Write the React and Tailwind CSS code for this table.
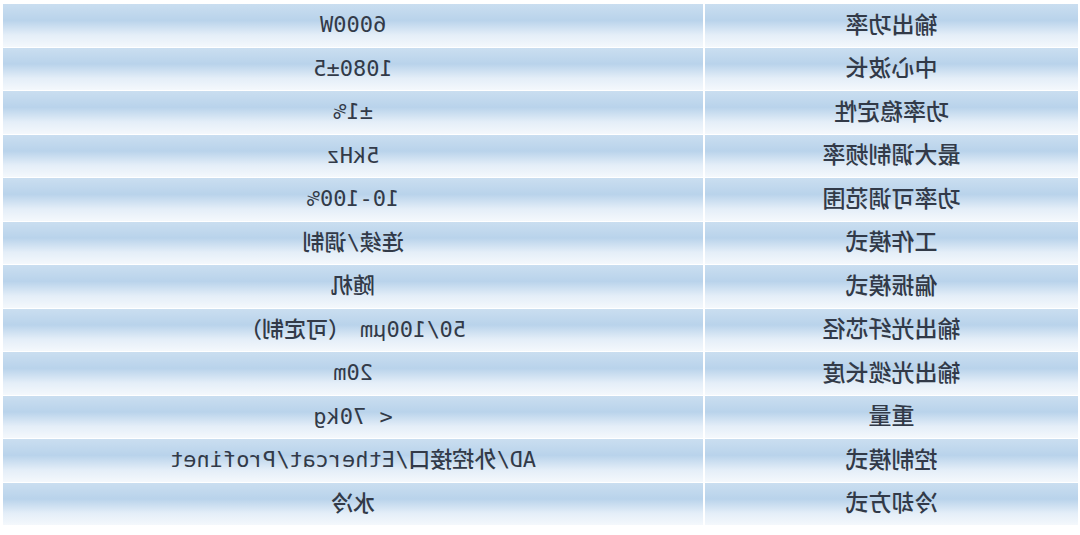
import React from "react";

const rows = [
  ["输出功率", "6000W"],
  ["中心波长", "1080±5"],
  ["功率稳定性", "±1%"],
  ["最大调制频率", "5kHz"],
  ["功率可调范围", "10-100%"],
  ["工作模式", "连续/调制"],
  ["偏振模式", "随机"],
  ["输出光纤芯径", "50/100μm（可定制）"],
  ["输出光缆长度", "20m"],
  ["重量", "< 70kg"],
  ["控制模式", "AD/外控接口/Ethercat/Profinet"],
  ["冷却方式", "水冷"],
];

const cell =
  "flex items-center justify-center bg-[linear-gradient(to_bottom,#cadef0_0%,#b9d3eb_38%,#e4eef8_72%,#f4f8fc_100%)] text-[#323a48] text-[22px] font-medium leading-none";

function Value({ v }) {
  if (v.includes("μm")) {
    const [a, b] = v.split("μm");
    return (
      <span>
        {a}
        <span className="pr-[10px]">μm</span>
        {b}
      </span>
    );
  }
  return <span>{v}</span>;
}

export default function App() {
  return (
    <div className="w-[1080px] h-[535px] bg-white overflow-hidden">
      <div
        className="w-[1080px] -scale-x-100 pt-[4px] pl-[2px] flex flex-col gap-px"
        style={{ fontFamily: '"DejaVu Sans Mono", "Noto Sans CJK SC", monospace' }}
      >
        {rows.map(([k, v]) => (
          <div key={k} className="flex h-[42.5px] gap-[2px]">
            <div className={cell + " w-[373px]"}>
              <span className="text-[23px]">{k}</span>
            </div>
            <div className={cell + " w-[700px]"}>
              <Value v={v} />
            </div>
          </div>
        ))}
      </div>
    </div>
  );
}
